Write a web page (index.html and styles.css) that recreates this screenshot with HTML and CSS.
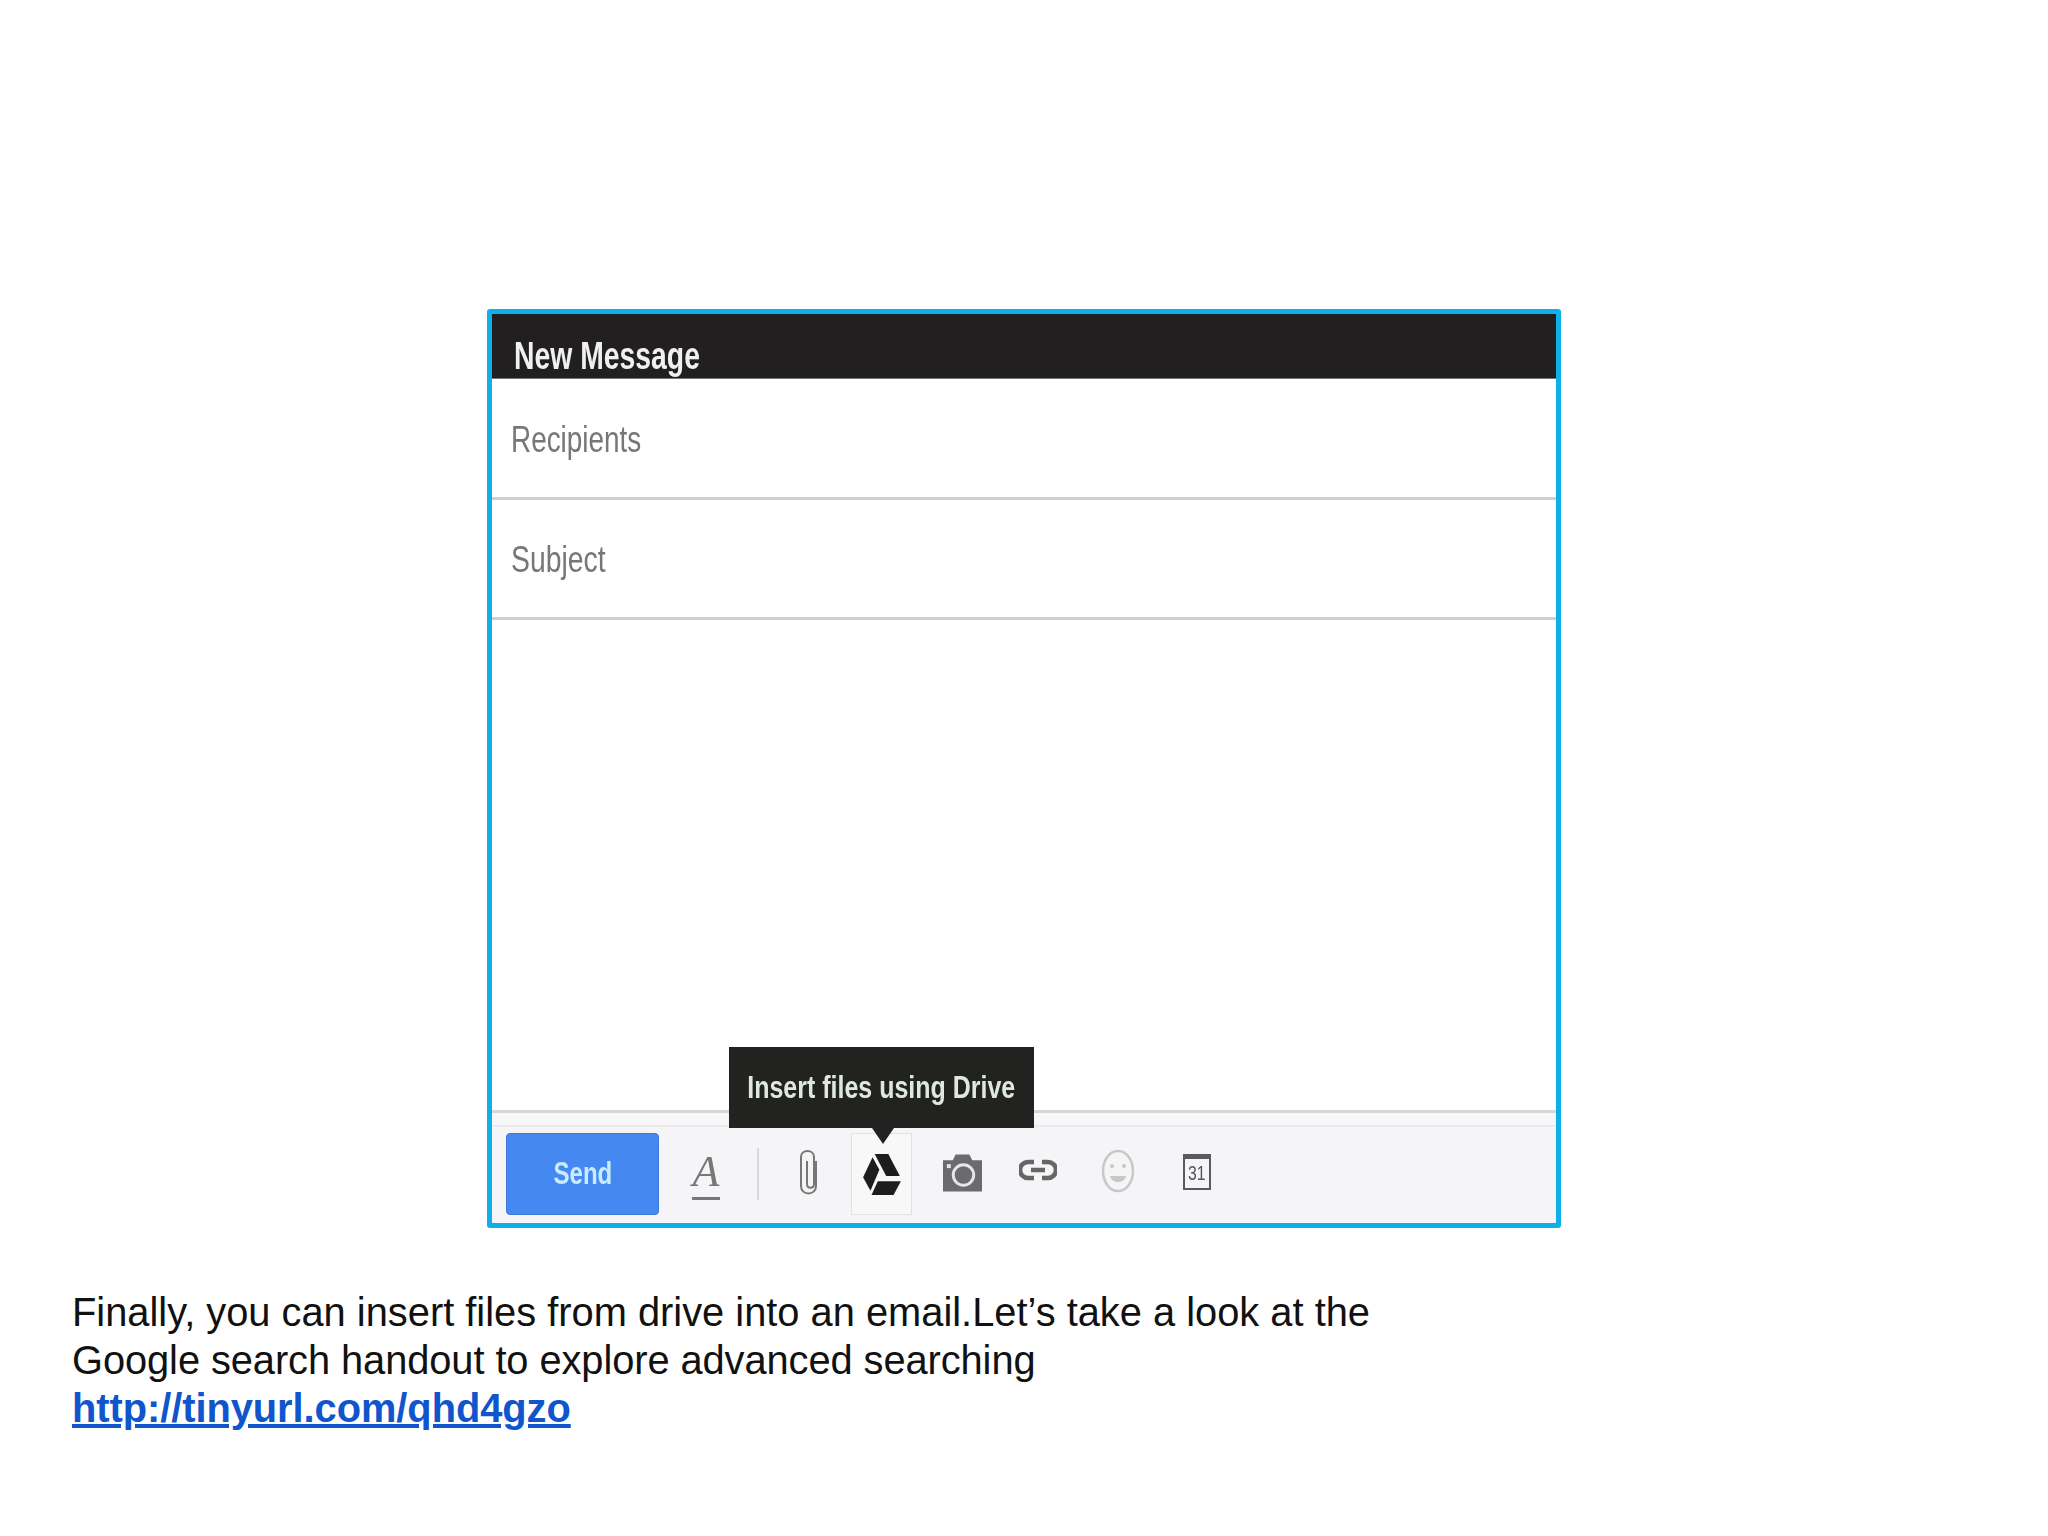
FILE: index.html
```html
<!DOCTYPE html>
<html lang="en">
<head>
<meta charset="utf-8">
<title>Insert files using Drive</title>
<link rel="stylesheet" href="styles.css">
</head>
<body>
<main class="slide">
  <section class="compose">
    <header class="compose-head"><span class="compose-title">New Message</span></header>
    <div class="field"><span class="field-label label-recipients">Recipients</span></div>
    <div class="field field-second"><span class="field-label label-subject">Subject</span></div>
    <div class="compose-body"></div>
    <footer class="toolbar">
      <button class="send" type="button"><span class="send-text">Send</span></button>
      <span class="format-a">A</span>
      <span class="divider"></span>
      <svg class="icon icon-clip" viewBox="0 0 24 48"><path d="M19 13v25c0 10-15 10-15 0V9c0-8 13-8 13 0v27c0 5-7 5-7 0V13" fill="none" stroke="#777" stroke-width="2"/></svg>
      <span class="drive-slot">
        <svg class="icon icon-drive" viewBox="0 0 36 40"><path d="M11 1h13l11 21H22z" fill="#1d1d1d"/><path d="M9 4l6.500 12L7 36 0 23z" fill="#1d1d1d"/><path d="M14 27h22l-7 13H8z" fill="#1d1d1d"/></svg>
        <span class="tooltip"><span class="tooltip-text">Insert files using Drive</span></span>
      </span>
      <svg class="icon icon-camera" viewBox="0 0 40 40"><path d="M0 8h10l3-6h14l3 6h10v32H0z" fill="#6b6b6d"/><circle cx="21" cy="23" r="10.500" fill="none" stroke="#e6e6e8" stroke-width="3"/><rect x="4" y="12" width="4" height="4" fill="#e6e6e8"/></svg>
      <svg class="icon icon-link" viewBox="0 0 38 24"><path d="M15 4H9a8 8 0 0 0 0 16h6M23 4h6a8 8 0 0 1 0 16h-6M12 12h14" fill="none" stroke="#666" stroke-width="4.500"/></svg>
      <svg class="icon icon-smile" viewBox="0 0 34 44"><ellipse cx="17" cy="22" rx="15" ry="20" fill="none" stroke="#c8c8c8" stroke-width="2.500"/><circle cx="11" cy="17" r="2" fill="#c8c8c8"/><circle cx="23" cy="17" r="2" fill="#c8c8c8"/><path d="M9 27h16c-2 8-14 8-16 0z" fill="#c8c8c8"/></svg>
      <span class="calendar"><span class="calendar-num">31</span></span>
    </footer>
  </section>
  <p class="caption">Finally, you can insert files from drive into an email.Let’s take a look at the<br><span class="caption-tight">Google search handout to explore advanced searching</span><br><a class="caption-link" href="#">http://tinyurl.com/qhd4gzo</a></p>
</main>
</body>
</html>
```
FILE: styles.css
```css
* { box-sizing: border-box; }
html, body { margin: 0; background: #fff; }
.slide { width: 2048px; height: 1536px; padding: 309px 0 0 72px; font-family: "Liberation Sans", Arial, sans-serif; }
.compose { margin-left: 415px; width: 1074px; height: 919px; border: 5px solid #0db0e8; border-radius: 3px; display: flex; flex-direction: column; background: #fff; filter: blur(0.6px); }
.compose-head { height: 65px; background: #221f20; padding: 20px 0 0 22px; overflow: hidden; flex: none; border-bottom: 1px solid #77767a; }
.compose-title { display: inline-block; font: 700 38px/44px "Liberation Sans", sans-serif; color: #f0eff2; white-space: nowrap; transform: scaleX(0.746); transform-origin: left center; }
.field { height: 121px; flex: none; padding: 39px 0 0 19px; border-bottom: 3px solid #cfcfd3; }
.field-second { height: 120px; padding-top: 38px; }
.field-label { display: inline-block; font: 400 36px/44px "Liberation Sans", sans-serif; color: #77777a; transform-origin: left center; }
.label-recipients { transform: scaleX(0.775); }
.label-subject { transform: scaleX(0.787); }
.compose-body { flex: 1; border-bottom: 3px solid #d6d6d8; }
.toolbar { height: 110px; flex: none; background: linear-gradient(#f7f6f8 0 12px, #ebebed 12px 14px, #f5f4f7 14px); padding: 20px 0 0 14px; display: flex; align-items: flex-start; }
.send { width: 153px; height: 82px; border: 1px solid #3c78d8; border-radius: 4px; background: #4688f1; color: #c9ecff; padding: 0; }
.send-text { display: inline-block; font: 700 31px "Liberation Sans", sans-serif; transform: scaleX(0.776); }
.format-a { margin: 14px 0 0 33px; width: 28px; font: italic 400 44px/50px "Liberation Serif", serif; color: #777; border-bottom: 3px solid #777; text-align: center; height: 53px; }
.divider { width: 2px; height: 52px; margin: 15px 0 0 37px; background: #d9d9dc; }
.icon { display: block; flex: none; }
.icon-clip { width: 24px; height: 48px; margin: 15px 0 0 38px; }
.drive-slot { position: relative; width: 61px; height: 82px; margin: 0 0 0 30px; flex: none; border: 1px solid #e2e2e4; background: #f8f8f9; }
.icon-drive { width: 38px; height: 42px; margin: 19px 0 0 11px; }
.tooltip { position: absolute; left: -123px; top: -87px; width: 305px; height: 81px; background: #222220; color: #dfe8df; display: flex; justify-content: center; align-items: center; }
.tooltip-text { flex: none; font: 700 31px/40px "Liberation Sans", sans-serif; white-space: nowrap; transform: scaleX(0.806); }
.tooltip::after { content: ""; position: absolute; left: 143px; top: 81px; border: 11px solid transparent; border-top: 16px solid #222220; border-bottom-width: 0; }
.icon-camera { width: 39px; height: 40px; margin: 19px 0 0 31px; }
.icon-link { width: 38px; height: 24px; margin: 25px 0 0 37px; }
.icon-smile { width: 34px; height: 44px; margin: 16px 0 0 44px; }
.calendar { margin: 21px 0 0 48px; width: 28px; height: 36px; border: 2px solid #5a5a5c; border-top-width: 5px; color: #555; display: flex; justify-content: center; }
.calendar-num { font: 400 21px/28px "Liberation Sans", sans-serif; transform: scaleX(0.75); }
.caption { margin: 60px 0 0; font-size: 39.84px; line-height: 48px; color: #111; white-space: nowrap; }
.caption-tight { letter-spacing: -0.08px; }
.caption-link { font-weight: 700; color: #1155cc; letter-spacing: -0.05px; text-decoration-thickness: 4px; }
```
